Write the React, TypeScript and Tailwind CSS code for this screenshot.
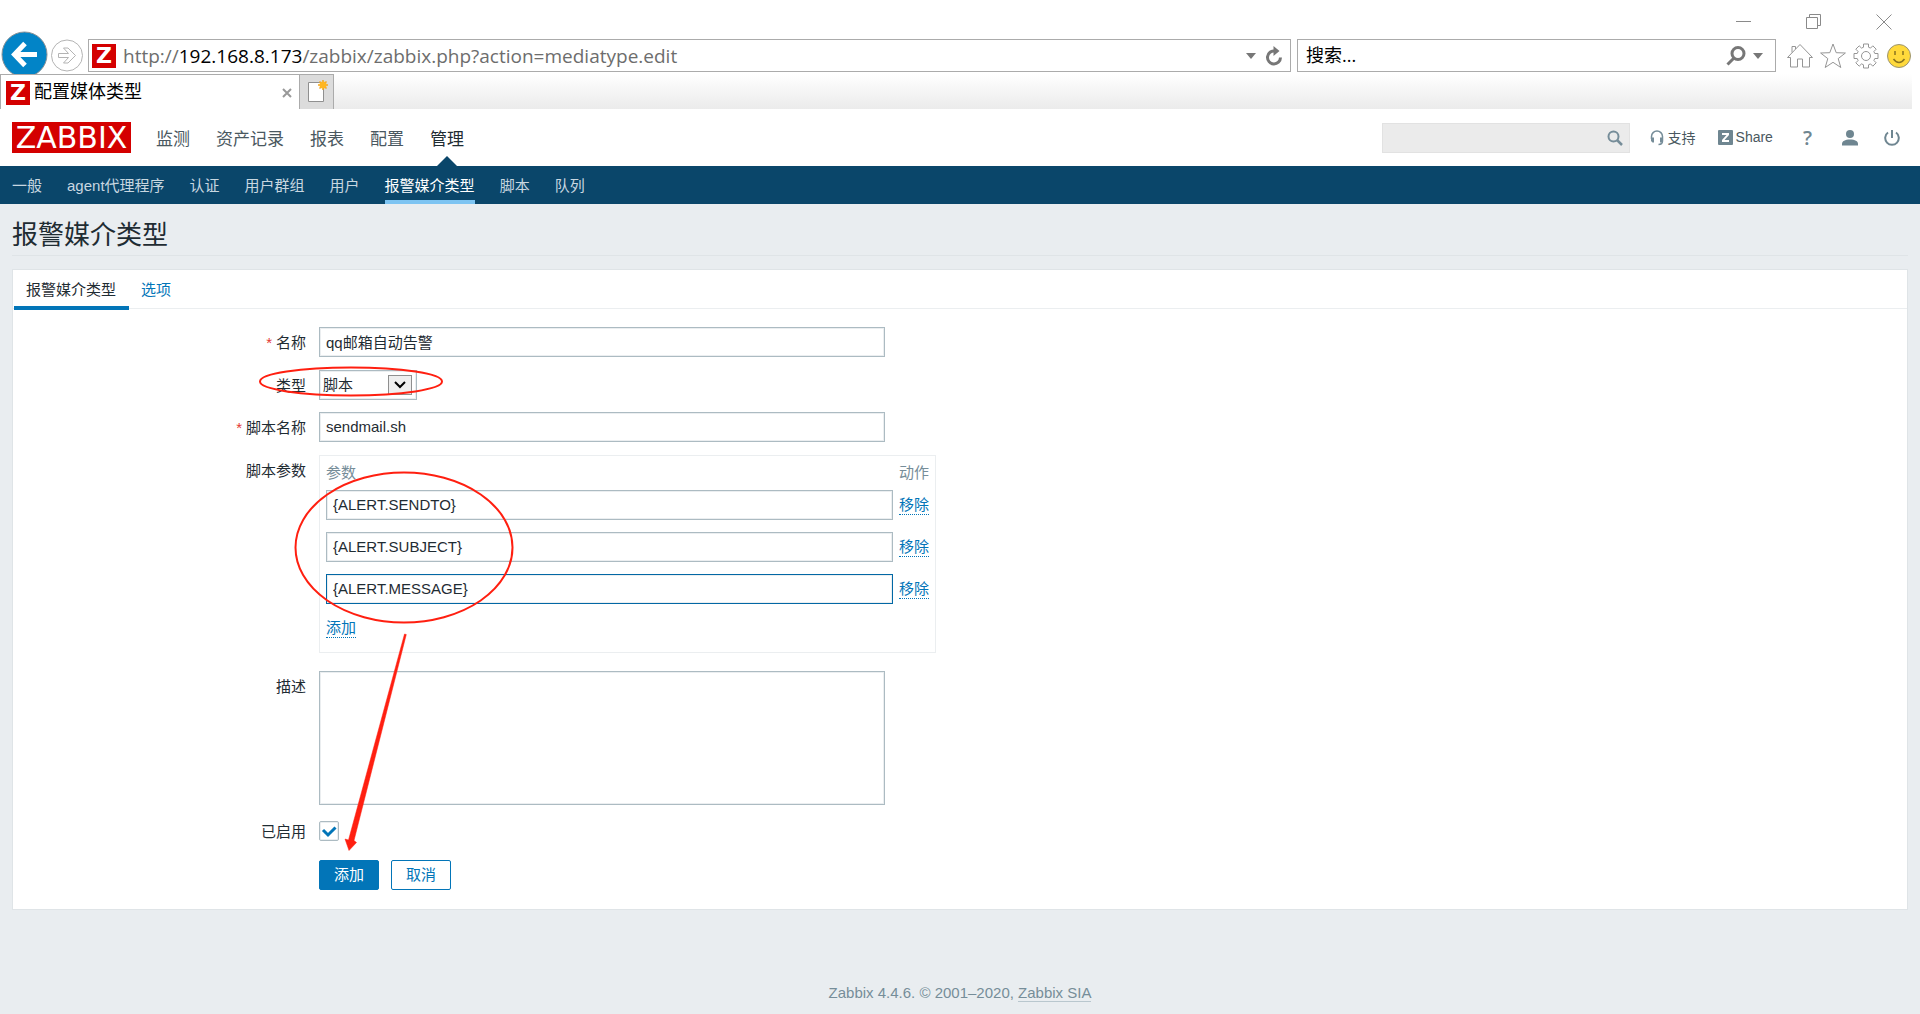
import React, { useState } from 'react';
import clsx from 'clsx';

const MENU = ['监测', '资产记录', '报表', '配置', '管理'];
const SUBMENU = ['一般', 'agent代理程序', '认证', '用户群组', '用户', '报警媒介类型', '脚本', '队列'];

const fieldClass =
  'block border border-[#acbbc2] bg-white px-[6px] text-[15px] text-[#1f2c33] shadow-[inset_0_0_0_1px_#ebeef0] outline-none';

const Favicon: React.FC = () => (
  <span className="flex h-6 w-6 shrink-0 items-center justify-center bg-[#d40000] font-['DejaVu_Sans'] text-[22px] leading-6 font-bold text-white">
    Z
  </span>
);

const WindowControls: React.FC = () => (
  <div className="flex h-[39px] items-start justify-end gap-[54px] pt-[14px] pr-[28px] text-[#8a8a8a]">
    <button type="button" aria-label="最小化">
      <svg width="16" height="16" fill="none" stroke="currentColor"><path d="M0 7.5h15" /></svg>
    </button>
    <button type="button" aria-label="还原">
      <svg width="16" height="16" fill="none" stroke="currentColor"><path d="M.5 3.5h11v11H.5zM3.5 3.5v-3h11v11h-3" /></svg>
    </button>
    <button type="button" aria-label="关闭">
      <svg width="16" height="16" fill="none" stroke="currentColor"><path d="M.5.5l15 15M15.5.5l-15 15" /></svg>
    </button>
  </div>
);

const BrowserBar: React.FC = () => (
  <div className="flex h-[35px] items-start pr-[8px] pl-[1px]">
    {/* Back / forward */}
    <button type="button" aria-label="后退" className="-mt-[8px] h-[43px] w-[47px] shrink-0 overflow-hidden">
      <svg width="47" height="46" viewBox="0 0 47 46">
        <circle cx="23.5" cy="23.5" r="22.5" fill="#0284c7" stroke="#8a9297" />
        <path d="M36 23.5H15M24 12.500l-10.500 11L24 34.500" fill="none" stroke="#fff" strokeWidth="5" />
      </svg>
    </button>
    <button type="button" aria-label="前进" className="mr-[4px] ml-[2px] shrink-0">
      <svg width="34" height="34" viewBox="0 0 34 34" fill="none" stroke="#b4b4b4">
        <circle cx="17" cy="16.500" r="15.500" />
        <path d="M8.500 14.500h10l-5-5.500h4.500l7.500 7.500-7.500 7.500h-4.500l5-5.500h-10z" />
      </svg>
    </button>

    <div className="flex h-[33px] min-w-0 flex-1 items-center border border-[#ababab] bg-white pl-[3px]">
      <Favicon />
      <div
        role="textbox"
        aria-label="地址"
        contentEditable
        suppressContentEditableWarning
        className="ml-[7px] flex-1 truncate font-['Open_Sans'] text-[19px] leading-[30px] text-[#6d6d6d] outline-none"
      >
        http://<span className="text-black">192.168.8.173</span>/zabbix/zabbix.php?action=mediatype.edit
      </div>
      <button type="button" aria-label="历史" className="p-[6px]">
        <svg width="10" height="6" fill="#777"><path d="M0 0h10L5 6z" /></svg>
      </button>
      <button type="button" aria-label="刷新" className="mr-[7px] ml-[3px]">
        <svg width="18" height="20" viewBox="0 0 18 20" fill="none">
          <path d="M10 5a6.500 6.500 0 1 0 5.500 6.500" stroke="#777" strokeWidth="3" />
          <path d="M8.500 0l6 5-6 5z" fill="#777" />
        </svg>
      </button>
    </div>

    <div className="ml-[6px] flex h-[33px] w-[479px] shrink-0 items-center border border-[#ababab] bg-white pl-[8px]">
      <input
        aria-label="搜索"
        placeholder="搜索..."
        className="min-w-0 flex-1 font-['Open_Sans','Noto_Sans_CJK_SC',sans-serif] text-[18px] outline-none placeholder:text-black"
      />
      <button type="button" aria-label="搜索">
        <svg width="20" height="20" viewBox="0 0 20 20" fill="none" stroke="#777">
          <circle cx="12" cy="7.500" r="6" strokeWidth="3" />
          <path d="M8 12l-6.500 6.500" strokeWidth="3" />
        </svg>
      </button>
      <button type="button" aria-label="搜索选项" className="mr-[6px] ml-[1px] p-[6px]">
        <svg width="10" height="6" fill="#777"><path d="M0 0h10L5 6z" /></svg>
      </button>
    </div>

    {/* Browser tools */}
    <div className="ml-[11px] flex shrink-0 gap-[7px] pt-[4px]">
      <button type="button" aria-label="主页">
        <svg width="26" height="26" viewBox="0 0 26 26" fill="none" stroke="#959595">
          <path d="M13 1.500L.5 14.500h3v9.500h7v-8h5v8h7v-9.500h3zM5 9.500v-6h3.500v2.500" />
        </svg>
      </button>
      <button type="button" aria-label="收藏">
        <svg width="26" height="26" viewBox="0 0 26 26" fill="none" stroke="#959595">
          <path d="M13 1l3.200 8.700 9.200.3-7.200 5.600 2.600 8.900L13 19.300l-7.800 5.200 2.600-8.900L.6 10l9.200-.3z" />
        </svg>
      </button>
      <button type="button" aria-label="工具">
        <svg width="26" height="26" viewBox="0 0 26 26" fill="none" stroke="#959595">
          <path d="M10.500 1h5v3.200l2 .9 2.300-2.300 3.400 3.400-2.300 2.300.9 2h3.200v5h-3.200l-.9 2 2.300 2.300-3.400 3.400-2.300-2.300-2 .9V25h-5v-3.200l-2-.9-2.300 2.300-3.400-3.400 2.300-2.300-.9-2H1v-5h3.200l.9-2-2.300-2.300 3.400-3.400 2.300 2.300 2-.9z" />
          <circle cx="13" cy="13" r="4.500" />
        </svg>
      </button>
      <button type="button" aria-label="反馈">
        <svg width="26" height="26" viewBox="0 0 26 26" fill="none">
          <circle cx="13" cy="13" r="11.500" fill="#ffd93b" stroke="#9b9471" />
          <path d="M9 8v4M17 8v4M7.500 16c3 4.500 8 4.500 11 0" stroke="#8a7420" strokeWidth="1.500" />
        </svg>
      </button>
    </div>
  </div>
);

const TabStrip: React.FC = () => (
  <div className="flex h-[35px]">
    <div className="flex w-[299px] items-center border-t border-l border-[#ababab] bg-white pt-[1px] pl-[5px]">
      <Favicon />
      <span className="ml-[4px] flex-1 text-[18px] text-black">配置媒体类型</span>
      <button type="button" aria-label="关闭标签页" className="mr-[7px]">
        <svg width="10" height="10" stroke="#999" strokeWidth="2"><path d="M1 1l8 8M9 1L1 9" /></svg>
      </button>
    </div>
    <button type="button" aria-label="新建标签页" className="w-[35px] border-x border-t border-[#ababab] bg-[#dcdcdc]">
      <svg width="33" height="34" viewBox="0 0 33 34" fill="none">
        <path d="M8.500 7.500h15v19h-15z" fill="#fff" stroke="#909090" />
        <path d="M23 5v10M18 10h10M19.500 6.500l7 7M26.500 6.500l-7 7" stroke="#f3a51c" strokeWidth="1.500" />
        <circle cx="23" cy="10" r="3.500" fill="#ffb620" />
      </svg>
    </button>
    <div className="mr-[8px] flex-1 bg-gradient-to-b from-white to-[#ebebeb]" />
  </div>
);

const Header: React.FC = () => (
  <header className="flex h-[57px] items-center justify-between bg-white pr-5 pl-3">
    <div className="flex items-center">
      <a href="#" className="flex h-[31px] w-[119px] items-center justify-center bg-[#d40000] font-['DejaVu_Sans'] text-[30px] leading-[31px] text-white">
        ZABBIX
      </a>
      <nav className="ml-[25px] flex h-[57px] gap-[26px]">
        {MENU.map((item) => {
          const active = item === '管理';
          return (
            <a
              key={item}
              href="#"
              className={clsx('relative flex items-center pt-1 text-[17px]', active ? 'text-[#1f2c33]' : 'text-[#4a5860]')}
            >
              {item}
              {active && (
                <svg width="20" height="10" className="absolute bottom-0 left-1/2 -translate-x-1/2" fill="#0a466a">
                  <path d="M0 10L10 0l10 10z" />
                </svg>
              )}
            </a>
          );
        })}
      </nav>
    </div>

    <div className="flex items-center text-[14px] text-[#4a5860]">
      <div className="flex h-[30px] w-[248px] items-center border border-[#e2e2e2] bg-[#ebebeb]">
        <input aria-label="全局搜索" className="min-w-0 flex-1 px-2 outline-none" />
        <button type="button" aria-label="查找" className="mr-[6px]">
          <svg width="16" height="16" viewBox="0 0 16 16" fill="none" stroke="#768d99">
            <circle cx="6.500" cy="6.500" r="5" strokeWidth="2" />
            <path d="M10 10l5 5" strokeWidth="2.500" />
          </svg>
        </button>
      </div>
      <a href="#" className="ml-5 flex items-center gap-[4px]">
        <svg width="14" height="16" viewBox="0 0 14 16" fill="none">
          <path d="M1.500 9V6.500a5.500 5.500 0 0 1 11 0V11c0 2.500-1.500 3.500-4 3.500" stroke="#768d99" strokeWidth="1.500" />
          <path d="M1 7.500h3v5H2.500L1 11zM10 7.500h3V11l-1.500 1.500H10z" fill="#768d99" />
        </svg>
        <span className="pt-0.5">支持</span>
      </a>
      <a href="#" className="ml-[22px] flex items-center gap-[3px]">
        <svg width="15" height="15" viewBox="0 0 15 15">
          <rect width="15" height="15" rx="1" fill="#6f8691" />
          <path d="M4 3h7v2l-4.500 5H11v2H4v-2l4.500-5H4z" fill="#fff" />
        </svg>
        Share
      </a>
      <a href="#" className="ml-[30px] font-['Open_Sans'] text-[20px] leading-5 font-semibold text-[#6f8691]">?</a>
      <a href="#" aria-label="用户资料" className="ml-[30px]">
        <svg width="16" height="16" viewBox="0 0 16 16" fill="#6f8691">
          <circle cx="8" cy="4" r="4" />
          <path d="M0 15.500v-1.500c0-3 3-4.500 8-4.500s8 1.500 8 4.500v1.500z" />
        </svg>
      </a>
      <a href="#" aria-label="退出" className="ml-[26px]">
        <svg width="16" height="16" viewBox="0 0 16 16" fill="none" stroke="#6f8691" strokeWidth="2">
          <path d="M4 2.500a6.800 6.800 0 1 0 8 0M8 0v8" />
        </svg>
      </a>
    </div>
  </header>
);

interface RowProps {
  label?: string;
  htmlFor?: string;
  required?: boolean;
  compact?: boolean;
  className?: string;
  children: React.ReactNode;
}

const Row: React.FC<RowProps> = ({ label, htmlFor, required, compact, className, children }) => (
  <div className={clsx('flex items-start', className)}>
    <label
      htmlFor={htmlFor}
      className={clsx('mr-[13px] w-[293px] shrink-0 text-right', compact ? 'leading-[22px]' : 'leading-[32px]')}
    >
      {required && <span className="mr-[4px] text-[#e33734]">*</span>}
      {label}
    </label>
    {children}
  </div>
);

const Annotations: React.FC = () => (
  <svg width="520" height="600" className="pointer-events-none absolute top-0 left-0" fill="none" stroke="#ff1f10" strokeWidth="2">
    <ellipse cx="338" cy="111.500" rx="91" ry="14" />
    <ellipse cx="391" cy="277.500" rx="108.500" ry="75" />
    <path
      d="M391.500 364l1.800.5L341 570.500l2.500 2-7.500 8-4-11.500 3.500 1z"
      fill="#ff1f10"
      strokeWidth="0.500"
    />
  </svg>
);

export default function App() {
  const [name, setName] = useState('qq邮箱自动告警');
  const [script, setScript] = useState('sendmail.sh');
  const [params, setParams] = useState(['{ALERT.SENDTO}', '{ALERT.SUBJECT}', '{ALERT.MESSAGE}']);
  const [enabled, setEnabled] = useState(true);

  const linkClass = 'border-b border-dotted border-[#0275b8] leading-[18px] text-[#0275b8]';
  const inputClass = clsx(fieldClass, 'h-[30px] pb-[2px]');

  return (
    <div className="flex min-h-screen flex-col bg-[#e9edf0] font-['Liberation_Sans','Noto_Sans_CJK_SC',sans-serif] text-[15px] text-[#1f2c33]">
      {/* Browser chrome */}
      <div className="bg-white">
        <WindowControls />
        <BrowserBar />
        <TabStrip />
      </div>

      <Header />
      <nav className="flex h-[38px] gap-[25px] bg-[#0a466a] px-3">
        {SUBMENU.map((item) => (
          <a
            key={item}
            href="#"
            className={clsx(
              'flex items-center border-b-4 pt-[6px]',
              item === '报警媒介类型' ? 'border-[#7dc4f2] text-white' : 'border-transparent text-[#c8d7e0]'
            )}
          >
            {item}
          </a>
        ))}
      </nav>

      <main className="flex-1 px-3">
        <h1 className="h-[52px] border-b border-[#dfe4e7] pt-[11px] text-[26px] leading-[40px]">报警媒介类型</h1>

        <form className="relative mt-[13px] border border-[#dfe4e7] bg-white pb-[18px]" onSubmit={(e) => e.preventDefault()}>
          <div className="flex h-[39px] border-b border-[#ebeef0] pl-[1px]">
            <button type="button" className="h-[40px] border-b-4 border-[#0275b8] pt-1 pr-[13px] pl-3">报警媒介类型</button>
            <button type="button" className="px-3 pt-[2px] text-[#0275b8]">选项</button>
          </div>

          <Row label="名称" htmlFor="name" required className="mt-[18px] h-[30px]">
            <input id="name" value={name} onChange={(e) => setName(e.target.value)} className={clsx(inputClass, 'w-[566px]')} />
          </Row>

          <Row label="类型" htmlFor="type" className="mt-[13px] h-[30px]">
            <div className="relative">
              <select id="type" className="block h-[30px] w-[98px] appearance-none border border-[#acbbc2] bg-white pl-[3px] shadow-[inset_0_0_0_1px_#ebeef0] outline-none">
                <option>脚本</option>
              </select>
              <span className="pointer-events-none absolute top-[5px] right-[5px] flex h-[20px] w-[24px] items-center justify-center border border-[#8f8f8f] bg-[#eeeeee]">
                <svg width="12" height="8" fill="none" stroke="#000" strokeWidth="2"><path d="M1 1l5 5 5-5" /></svg>
              </span>
            </div>
          </Row>

          <Row label="脚本名称" htmlFor="script" required className="mt-3 h-[30px]">
            <input id="script" value={script} onChange={(e) => setScript(e.target.value)} className={clsx(inputClass, 'w-[566px]')} />
          </Row>

          <Row label="脚本参数" className="mt-[13px]">
            <div className="border border-[#ebeef0] px-[6px] pb-[6px]">
              <table>
                <thead>
                  <tr className="h-[28px] text-left text-[#768d99]">
                    <th className="p-0 pt-[6px] font-normal leading-[22px]">参数</th>
                    <th className="p-0 pt-[6px] pl-[6px] font-normal leading-[22px]">动作</th>
                  </tr>
                </thead>
                <tbody>
                  {params.map((param, i) => (
                    <tr key={i} className="h-[42px]">
                      <td className="p-0">
                        <input
                          aria-label={`参数 ${i + 1}`}
                          value={param}
                          onChange={(e) => setParams(params.map((p, j) => (j === i ? e.target.value : p)))}
                          className={clsx(inputClass, 'w-[567px]', i === 2 && 'border-[#0268a5]!')}
                        />
                      </td>
                      <td className="p-0 pl-[6px]">
                        <button type="button" className={linkClass} onClick={() => setParams(params.filter((_, j) => j !== i))}>移除</button>
                      </td>
                    </tr>
                  ))}
                  <tr className="h-[36px]">
                    <td colSpan={2} className="p-0">
                      <button type="button" className={linkClass} onClick={() => setParams([...params, ''])}>添加</button>
                    </td>
                  </tr>
                </tbody>
              </table>
            </div>
          </Row>

          <Row label="描述" htmlFor="description" className="mt-[18px]">
            <textarea id="description" className={clsx(fieldClass, 'h-[134px] w-[566px] resize-none')} />
          </Row>

          <Row label="已启用" htmlFor="enabled" compact className="mt-4">
            <div className="relative h-[20px] w-[20px]">
              <input
                id="enabled"
                type="checkbox"
                checked={enabled}
                onChange={(e) => setEnabled(e.target.checked)}
                className="block h-[20px] w-[20px] appearance-none rounded-[2px] border border-[#acbbc2] bg-white shadow-[inset_0_0_0_1px_#ebeef0]"
              />
              {enabled && (
                <svg width="20" height="20" className="pointer-events-none absolute top-0 left-0" fill="none" stroke="#0275b8" strokeWidth="3">
                  <path d="M4 9l5 5 7.500-7.500" />
                </svg>
              )}
            </div>
          </Row>

          <Row className="mt-[17px] h-[31px]">
            <div className="flex gap-3">
              <button type="submit" className="h-[30px] w-[60px] rounded-[2px] border border-[#0275b8] bg-[#0275b8] text-white">添加</button>
              <button type="button" className="h-[30px] w-[60px] rounded-[2px] border border-[#0275b8] bg-white text-[#0275b8]">取消</button>
            </div>
          </Row>

          <Annotations />
        </form>
      </main>

      <footer className="pb-[11px] text-center leading-5 text-[#768d99]">
        Zabbix 4.4.6. © 2001–2020,{' '}
        <a href="#" className="border-b border-[#b9c7ce]">Zabbix SIA</a>
      </footer>
    </div>
  );
}
